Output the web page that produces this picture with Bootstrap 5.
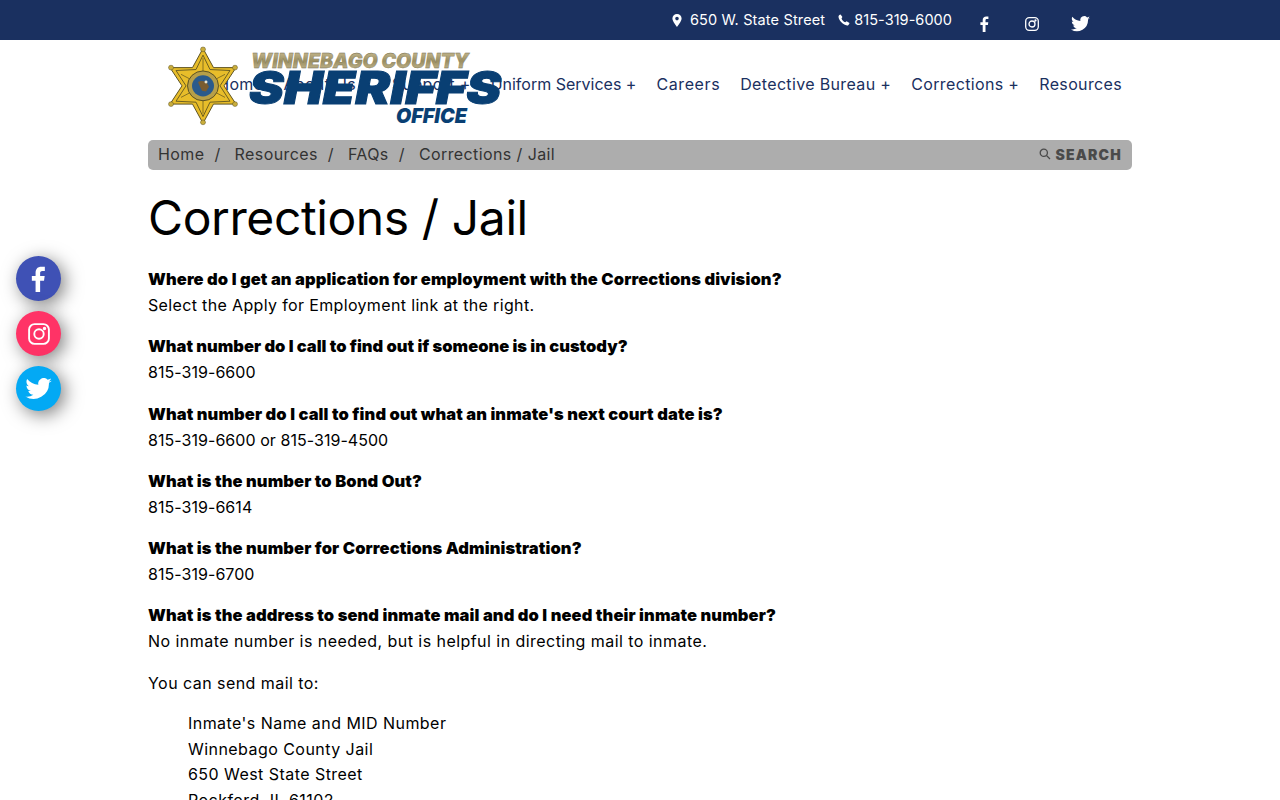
<!DOCTYPE html>
<html lang="en">
<head>
<meta charset="utf-8">
<title>Corrections / Jail</title>
<link rel="stylesheet" href="https://cdn.jsdelivr.net/npm/bootstrap@5.3.0/dist/css/bootstrap.min.css">
<style>
html,body{overflow-x:hidden}
body{font-family:"Inter","Liberation Sans",sans-serif;color:#000;font-size:16px;letter-spacing:.45px}
.wrapx{width:984px;margin:0 auto}
.topstrip{background:#1a3060;height:40px;color:#fff;font-size:14.5px;letter-spacing:.15px}
.topstrip .wrapx{height:40px;padding-right:28px}
.topicon{width:48px;margin-top:8px}
.phoneglyph{margin-left:13px}
.navzone{height:100px;position:relative;padding-bottom:12px}
.mainnav a{color:#1a3060;text-decoration:none;font-size:16px;padding:0 10px;white-space:nowrap;letter-spacing:.35px}
.mainnav a.navtight{letter-spacing:0}
.mainnav a.navwide{letter-spacing:.6px}
.logoart{position:absolute;left:20px;top:5px;width:340px;height:88px}
.crumbbar{background:#adadad;height:30px;border-radius:5px;padding:0 10px 2px;color:#333;letter-spacing:.4px}
.crumbbar a{color:#333;text-decoration:none}
.crumbbar .sep{margin:0 14px 0 10px}
.searchtag{font-weight:900;font-size:14px;letter-spacing:1.2px;color:#4a4a4a}
.pagehead{font-size:48px;font-weight:400;margin:22px 0 22px;line-height:52px;letter-spacing:-.4px}
.qa{font-weight:900;margin:0;line-height:26px;font-size:16.5px;letter-spacing:.1px}
.qa.qb{letter-spacing:0}
.ans{margin:0 0 15.3px;line-height:26px}
.ans.ansa{letter-spacing:.35px}
.nums{letter-spacing:.05px}
.addr{margin:4px 0 0 40px;line-height:25.6px}
.sidesoc{position:fixed;left:16px;top:256px;display:flex;flex-direction:column;gap:10px}
.sidesoc span{width:45px;height:45px;border-radius:50%;display:flex;align-items:center;justify-content:center;box-shadow:4px 4px 18px rgba(0,0,0,.5)}
.fbc{background:#3f51b5}.igc{background:#ff3366}.twc{background:#03a9f4}
</style>
</head>
<body>
<div class="topstrip">
  <div class="wrapx d-flex justify-content-end align-items-center">
    <svg width="10" height="13" viewBox="0 0 10 13" class="me-2"><path fill="#fff" fill-rule="evenodd" d="M5 0a4.600 4.600 0 0 0-4.600 4.600C.4 7.600 5 13 5 13s4.600-5.400 4.600-8.400A4.600 4.600 0 0 0 5 0zm0 6.400a1.800 1.800 0 1 1 0-3.600 1.800 1.800 0 0 1 0 3.600z"/></svg>
    <span>650 W. State Street</span>
    <svg width="12" height="12" viewBox="0 0 12 12" class="phoneglyph me-1"><path fill="#fff" d="M2.600.4 4.400 3 3.500 4.400c.6 1.600 2 3 3.800 3.900l1.300-1 2.900 1.700c-.3 1.400-1.200 2.600-2.400 2.600C4.700 10.600.5 6.200.5 2.500.5 1.500 1.400.6 2.600.4z"/></svg>
    <span class="nums">815-319-6000</span>
    <span class="topicon d-flex justify-content-center ms-2"><svg width="9" height="16" viewBox="0 0 9 16"><path fill="#fff" d="M2.700 16V9H.4V6.200h2.300V4.100C2.700 1.700 4.100.4 6.200.4c1 0 1.900.1 2.200.1v2.500H6.900c-1.200 0-1.400.6-1.400 1.400v1.800h2.800L7.900 9H5.500v7z"/></svg></span>
    <span class="topicon d-flex justify-content-center"><svg width="14" height="14" viewBox="0 0 14 14" fill="none" stroke="#fff" stroke-width="1.300"><rect x=".7" y=".7" width="12.600" height="12.600" rx="3.500"/><circle cx="7" cy="7" r="3"/><circle cx="10.500" cy="3.500" r=".5" fill="#fff"/></svg></span>
    <span class="topicon d-flex justify-content-center"><svg width="19" height="16" viewBox="0 0 24 20"><path fill="#fff" d="M24 2.400c-.9.400-1.800.7-2.800.8 1-.6 1.800-1.600 2.200-2.700-1 .6-2 1-3.100 1.200A4.900 4.900 0 0 0 11.900 6.200C7.800 6 4.200 4 1.700.9c-1.300 2.200-.6 5 1.500 6.500-.8 0-1.600-.2-2.200-.6 0 2.300 1.600 4.400 3.900 4.900-.7.200-1.500.2-2.200.1.600 2 2.400 3.400 4.600 3.400A9.900 9.900 0 0 1 0 16.800 14 14 0 0 0 21.500 4.400c1-.7 1.800-1.200 2.500-2z"/></svg></span>
  </div>
</div>
<div class="wrapx navzone d-flex align-items-center justify-content-end">
  <nav class="mainnav d-flex">
    <a href="#">Home</a><a href="#">About Us +</a><a href="#">Support +</a><a href="#" class="navtight">Uniform Services +</a><a href="#" class="navwide">Careers</a><a href="#">Detective Bureau +</a><a href="#">Corrections +</a><a href="#">Resources</a>
  </nav>
  <svg class="logoart" viewBox="0 0 340 88">
    <defs>
      <linearGradient id="goldt" x1="0" y1="0" x2="0" y2="1"><stop offset="0" stop-color="#d2c49a"/><stop offset=".5" stop-color="#9a8e62"/><stop offset="1" stop-color="#d0c49c"/></linearGradient>
    </defs>
    <g transform="translate(0 1.500) scale(1 .96)">
      <path fill="#e8bd2a" stroke="#5a5020" stroke-width="1" d="M35 2 L45.500 22 L68 22 L56 41 L68 60 L45.500 60 L35 80 L24.500 60 L2 60 L14 41 L2 22 L24.500 22Z"/>
      <path fill="none" stroke="#6b5d20" stroke-width="1" d="M35 9 L42 24 L62 25 L52 41 L62 57 L42 58 L35 73 L28 58 L8 57 L18 41 L8 25 L28 24Z"/>
      <path fill="none" stroke="#6b5d20" stroke-width=".8" d="M13 29 L57 53 M57 29 L13 53 M35 12V70"/>
      <circle cx="35" cy="3" r="2.500" fill="#c9ad3c" stroke="#5a5020" stroke-width=".5"/><circle cx="35" cy="79" r="2.500" fill="#c9ad3c" stroke="#5a5020" stroke-width=".5"/><circle cx="3" cy="22" r="2.500" fill="#c9ad3c" stroke="#5a5020" stroke-width=".5"/><circle cx="67" cy="22" r="2.500" fill="#c9ad3c" stroke="#5a5020" stroke-width=".5"/><circle cx="3" cy="60" r="2.500" fill="#c9ad3c" stroke="#5a5020" stroke-width=".5"/><circle cx="67" cy="60" r="2.500" fill="#c9ad3c" stroke="#5a5020" stroke-width=".5"/>
      <circle cx="35" cy="41" r="15.500" fill="#b79f48" stroke="#5a5020" stroke-width="1"/>
      <circle cx="35" cy="41" r="11" fill="#2a5a8c"/>
      <path fill="#7a5c30" d="M30 37c3-2 7-1 9 1l2 4-3 5-4-1-2-4z"/>
      <circle cx="38" cy="37" r="1.500" fill="#e8e4d0"/>
    </g>
    <text x="83" y="23" textLength="218" lengthAdjust="spacingAndGlyphs" font-family="Inter" font-weight="900" font-style="italic" font-size="20" letter-spacing="0" fill="url(#goldt)" stroke="#6f6a4c" stroke-width=".3">WINNEBAGO COUNTY</text>
    <text x="81" y="59" textLength="252" lengthAdjust="spacingAndGlyphs" font-family="Inter" font-weight="900" font-style="italic" font-size="45" letter-spacing="0" fill="#093f73" stroke="#093f73" stroke-width="1">SHERIFFS</text>
    <text x="228" y="78" textLength="71" lengthAdjust="spacingAndGlyphs" font-family="Inter" font-weight="900" font-style="italic" font-size="20" letter-spacing="0" fill="#093f73">OFFICE</text>
  </svg>
</div>
<div class="wrapx">
  <div class="crumbbar d-flex align-items-center justify-content-between">
    <div><a href="#">Home</a><span class="sep">/</span><a href="#">Resources</a><span class="sep">/</span><a href="#">FAQs</a><span class="sep">/</span><span>Corrections / Jail</span></div>
    <div class="d-flex align-items-center gap-1"><svg width="12" height="12" viewBox="0 0 12 12" fill="none" stroke="#4a4a4a" stroke-width="1.300"><circle cx="4.800" cy="4.800" r="3.600"/><path d="M7.500 7.500 11 11"/></svg><span class="searchtag">SEARCH</span></div>
  </div>
  <h1 class="pagehead">Corrections / Jail</h1>
  <p class="qa">Where do I get an application for employment with the Corrections division?</p>
  <p class="ans ansa">Select the Apply for Employment link at the right.</p>
  <p class="qa qb">What number do I call to find out if someone is in custody?</p>
  <p class="ans nums">815-319-6600</p>
  <p class="qa">What number do I call to find out what an inmate's next court date is?</p>
  <p class="ans nums">815-319-6600 or 815-319-4500</p>
  <p class="qa">What is the number to Bond Out?</p>
  <p class="ans nums">815-319-6614</p>
  <p class="qa">What is the number for Corrections Administration?</p>
  <p class="ans nums">815-319-6700</p>
  <p class="qa">What is the address to send inmate mail and do I need their inmate number?</p>
  <p class="ans">No inmate number is needed, but is helpful in directing mail to inmate.</p>
  <p class="ans">You can send mail to:</p>
  <p class="addr">Inmate's Name and MID Number<br>Winnebago County Jail<br>650 West State Street<br>Rockford, IL 61102</p>
</div>
<div class="sidesoc">
  <span class="fbc"><svg width="15" height="26" viewBox="0 0 9 16"><path fill="#fff" d="M2.700 16V9H.4V6.200h2.300V4.100C2.700 1.700 4.100.4 6.200.4c1 0 1.900.1 2.200.1v2.500H6.900c-1.200 0-1.400.6-1.400 1.400v1.800h2.800L7.900 9H5.500v7z"/></svg></span>
  <span class="igc"><svg width="22" height="22" viewBox="0 0 14 14" fill="none" stroke="#fff" stroke-width="1.200"><rect x=".7" y=".7" width="12.600" height="12.600" rx="3.500"/><circle cx="7" cy="7" r="3"/><circle cx="10.500" cy="3.500" r=".5" fill="#fff"/></svg></span>
  <span class="twc"><svg width="27" height="22" viewBox="0 0 24 20"><path fill="#fff" d="M24 2.400c-.9.400-1.800.7-2.800.8 1-.6 1.800-1.600 2.200-2.700-1 .6-2 1-3.100 1.200A4.900 4.900 0 0 0 11.900 6.200C7.800 6 4.200 4 1.700.9c-1.300 2.200-.6 5 1.500 6.500-.8 0-1.600-.2-2.200-.6 0 2.300 1.600 4.400 3.900 4.900-.7.200-1.500.2-2.200.1.600 2 2.400 3.400 4.600 3.400A9.900 9.900 0 0 1 0 16.800 14 14 0 0 0 21.500 4.400c1-.7 1.800-1.200 2.500-2z"/></svg></span>
</div>
<script src="https://cdn.jsdelivr.net/npm/bootstrap@5.3.0/dist/js/bootstrap.bundle.min.js"></script>
</body>
</html>
